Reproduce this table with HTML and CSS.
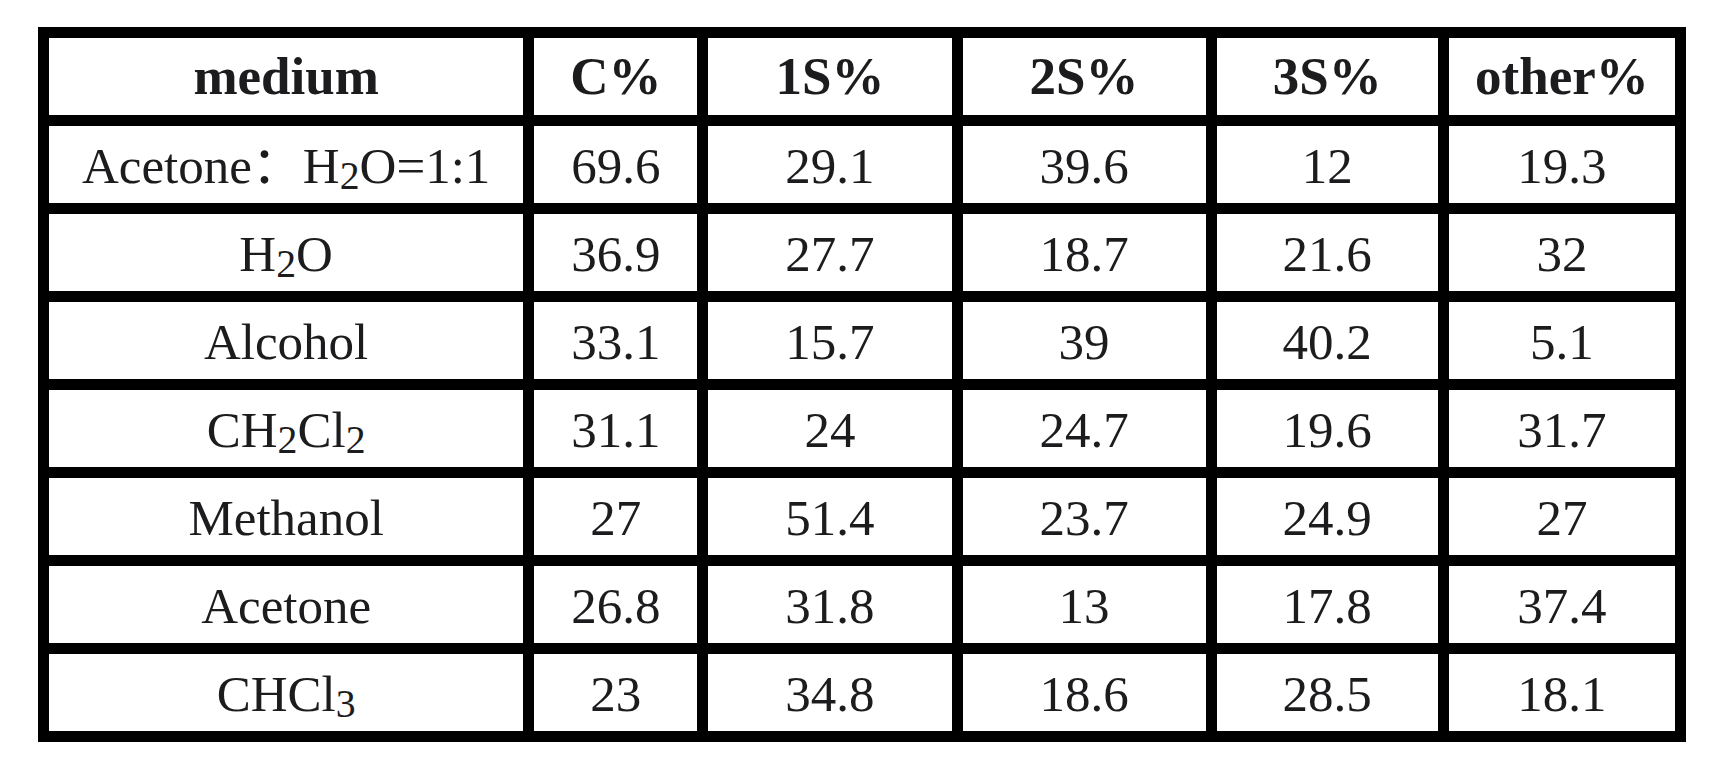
FILE: index.html
```html
<!DOCTYPE html>
<html lang="en">
<head>
  <meta charset="UTF-8">
  <meta name="viewport" content="width=device-width, initial-scale=1.0">
  <title>Medium composition</title>
  <link rel="stylesheet" href="styles.css">
</head>
<body>
  <table class="grid">
    <colgroup>
      <col class="c-medium">
      <col class="c-c">
      <col class="c-1s">
      <col class="c-2s">
      <col class="c-3s">
      <col class="c-other">
    </colgroup>
    <thead>
      <tr>
        <th>medium</th>
        <th>C%</th>
        <th>1S%</th>
        <th>2S%</th>
        <th>3S%</th>
        <th>other%</th>
      </tr>
    </thead>
    <tbody>
      <tr>
        <td>Acetone：H<sub>2</sub>O=1:1</td>
        <td>69.6</td>
        <td>29.1</td>
        <td>39.6</td>
        <td>12</td>
        <td>19.3</td>
      </tr>
      <tr>
        <td>H<sub>2</sub>O</td>
        <td>36.9</td>
        <td>27.7</td>
        <td>18.7</td>
        <td>21.6</td>
        <td>32</td>
      </tr>
      <tr>
        <td>Alcohol</td>
        <td>33.1</td>
        <td>15.7</td>
        <td>39</td>
        <td>40.2</td>
        <td>5.1</td>
      </tr>
      <tr>
        <td>CH<sub>2</sub>Cl<sub>2</sub></td>
        <td>31.1</td>
        <td>24</td>
        <td>24.7</td>
        <td>19.6</td>
        <td>31.7</td>
      </tr>
      <tr>
        <td>Methanol</td>
        <td>27</td>
        <td>51.4</td>
        <td>23.7</td>
        <td>24.9</td>
        <td>27</td>
      </tr>
      <tr>
        <td>Acetone</td>
        <td>26.8</td>
        <td>31.8</td>
        <td>13</td>
        <td>17.8</td>
        <td>37.4</td>
      </tr>
      <tr>
        <td>CHCl<sub>3</sub></td>
        <td>23</td>
        <td>34.8</td>
        <td>18.6</td>
        <td>28.5</td>
        <td>18.1</td>
      </tr>
    </tbody>
  </table>
</body>
</html>
```
FILE: styles.css
```css
body {
  margin: 0;
  padding: 27px 0 0 38px;
  background-color: #ffffff;
  font-family: "Liberation Serif", "Noto Sans CJK SC", serif;
  color: #1c1c1e;
}
.grid {
  border-collapse: separate;
  border-spacing: 11px;
  background-color: #000000;
  width: 1648px;
  table-layout: fixed;
}
.c-medium { width: 474px; }
.c-c { width: 163px; }
.c-1s { width: 243px; }
.c-2s { width: 243px; }
.c-3s { width: 221px; }
.c-other { width: 226px; }
.grid th,
.grid td {
  background-color: #ffffff;
  height: 77px;
  padding: 0;
  text-align: center;
  vertical-align: middle;
  font-size: 51px;
  line-height: 1;
}
.grid th {
  font-weight: bold;
  font-size: 53px;
}
.grid td {
  font-weight: normal;
  padding-top: 4px;
  height: 73px;
}
.grid sub {
  font-size: 0.78em;
  vertical-align: -0.16em;
  line-height: 0;
}
```
